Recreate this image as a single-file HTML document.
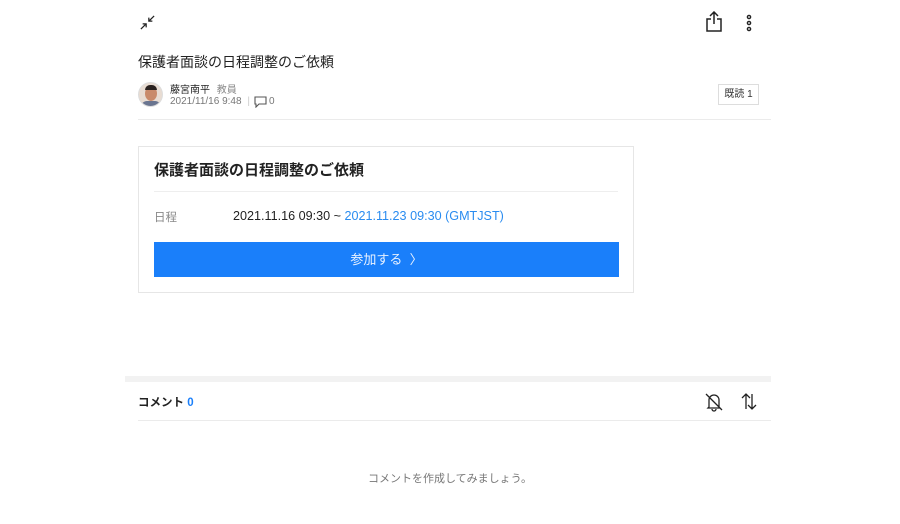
<!DOCTYPE html>
<html><head><meta charset="utf-8"><style>
*{margin:0;padding:0;box-sizing:border-box}
body{width:900px;height:524px;background:#fff;font-family:"Liberation Sans","Noto Sans CJK JP",sans-serif;color:#222;position:relative;overflow:hidden}
.a{position:absolute}
</style></head><body>
<svg class="a" style="left:140px;top:15px" width="15" height="15" viewBox="0 0 17 17" fill="none" stroke="#222" stroke-width="1.4"><path d="M1 16L7 10M3 10H7V14M16 1L10 7M10 3V7H14"/></svg>
<svg class="a" style="left:705px;top:11px" width="18" height="22" viewBox="0 0 18 22" fill="none" stroke="#222" stroke-width="1.5"><path d="M9 1V13M5 5L9 1L13 5M6 8H2V20H16V8H12"/></svg>
<svg class="a" style="left:746px;top:14px" width="6" height="18" viewBox="0 0 6 18" fill="none" stroke="#222" stroke-width="1.4"><circle cx="3" cy="3" r="1.6"/><circle cx="3" cy="9" r="1.6"/><circle cx="3" cy="15" r="1.6"/></svg>
<div class="a" style="left:138px;top:52px;font-size:14px;color:#222">保護者面談の日程調整のご依頼</div>
<div class="a" style="left:138px;top:82px;width:25px;height:25px;border-radius:50%;background:#e8dcd2;overflow:hidden;border:1px solid #ddd"><div style="position:absolute;left:6px;top:3px;width:12px;height:15px;border-radius:50%;background:#c98a6a"></div><div style="position:absolute;left:6px;top:2px;width:12px;height:5px;border-radius:6px 6px 0 0;background:#2a2220"></div><div style="position:absolute;left:2px;top:18px;width:20px;height:10px;border-radius:6px 6px 0 0;background:#6a7590"></div></div>
<div class="a" style="left:170px;top:81px;font-size:10px;color:#222">藤宮南平 <span style="color:#888;margin-left:4px">教員</span></div>
<div class="a" style="left:170px;top:96px;font-size:10px;color:#777">2021/11/16 9:48 <span style="color:#ccc;margin:0 3px">|</span></div>
<svg class="a" style="left:254px;top:96px" width="13" height="12" viewBox="0 0 13 12" fill="none" stroke="#555" stroke-width="1.1"><path d="M1 1H12V8H5L2 11V8H1Z"/></svg>
<div class="a" style="left:269px;top:96px;font-size:10px;color:#777">0</div>
<div class="a" style="left:718px;top:84px;width:41px;height:21px;border:1px solid #ddd;font-size:10px;line-height:19px;text-align:center;color:#333">既読 1</div>
<div class="a" style="left:138px;top:119px;width:633px;height:1px;background:#ebebeb"></div>
<div class="a" style="left:138px;top:146px;width:496px;height:147px;border:1px solid #e6e6e6"></div>
<div class="a" style="left:154px;top:159px;font-size:15px;font-weight:bold;color:#222">保護者面談の日程調整のご依頼</div>
<div class="a" style="left:154px;top:191px;width:464px;height:1px;background:#eee"></div>
<div class="a" style="left:154px;top:209px;font-size:11.5px;color:#888">日程</div>
<div class="a" style="left:233px;top:209px;font-size:12.6px;color:#222">2021.11.16 09:30 ~ <span style="color:#2a8cf0">2021.11.23 09:30 (GMTJST)</span></div>
<div class="a" style="left:154px;top:242px;width:465px;height:35px;background:#1a7ffa;color:#e8f1ff;font-size:13px;line-height:35px;text-align:center">参加する &nbsp;〉</div>
<div class="a" style="left:125px;top:376px;width:646px;height:6px;background:#f2f2f2"></div>
<div class="a" style="left:138px;top:394px;font-size:11.5px;font-weight:bold;color:#222">コメント <span style="color:#1a7ffa">0</span></div>
<svg class="a" style="left:704px;top:392px" width="20" height="20" viewBox="0 0 20 20" fill="none" stroke="#222" stroke-width="1.3"><path d="M5 15V8A5 5 0 0 1 15 8V15L16 16H4ZM8 17A2 2 0 0 0 12 17M2 2L18 18"/></svg>
<svg class="a" style="left:740px;top:392px" width="18" height="19" viewBox="0 0 18 19" fill="none" stroke="#222" stroke-width="1.3"><path d="M6 17V2M2 6L6 2L10 6M12 2V17M8 13L12 17L16 13"/></svg>
<div class="a" style="left:138px;top:420px;width:633px;height:1px;background:#ebebeb"></div>
<div class="a" style="left:0;width:900px;top:470px;text-align:center;font-size:11px;color:#777">コメントを作成してみましょう。</div>
</body></html>
